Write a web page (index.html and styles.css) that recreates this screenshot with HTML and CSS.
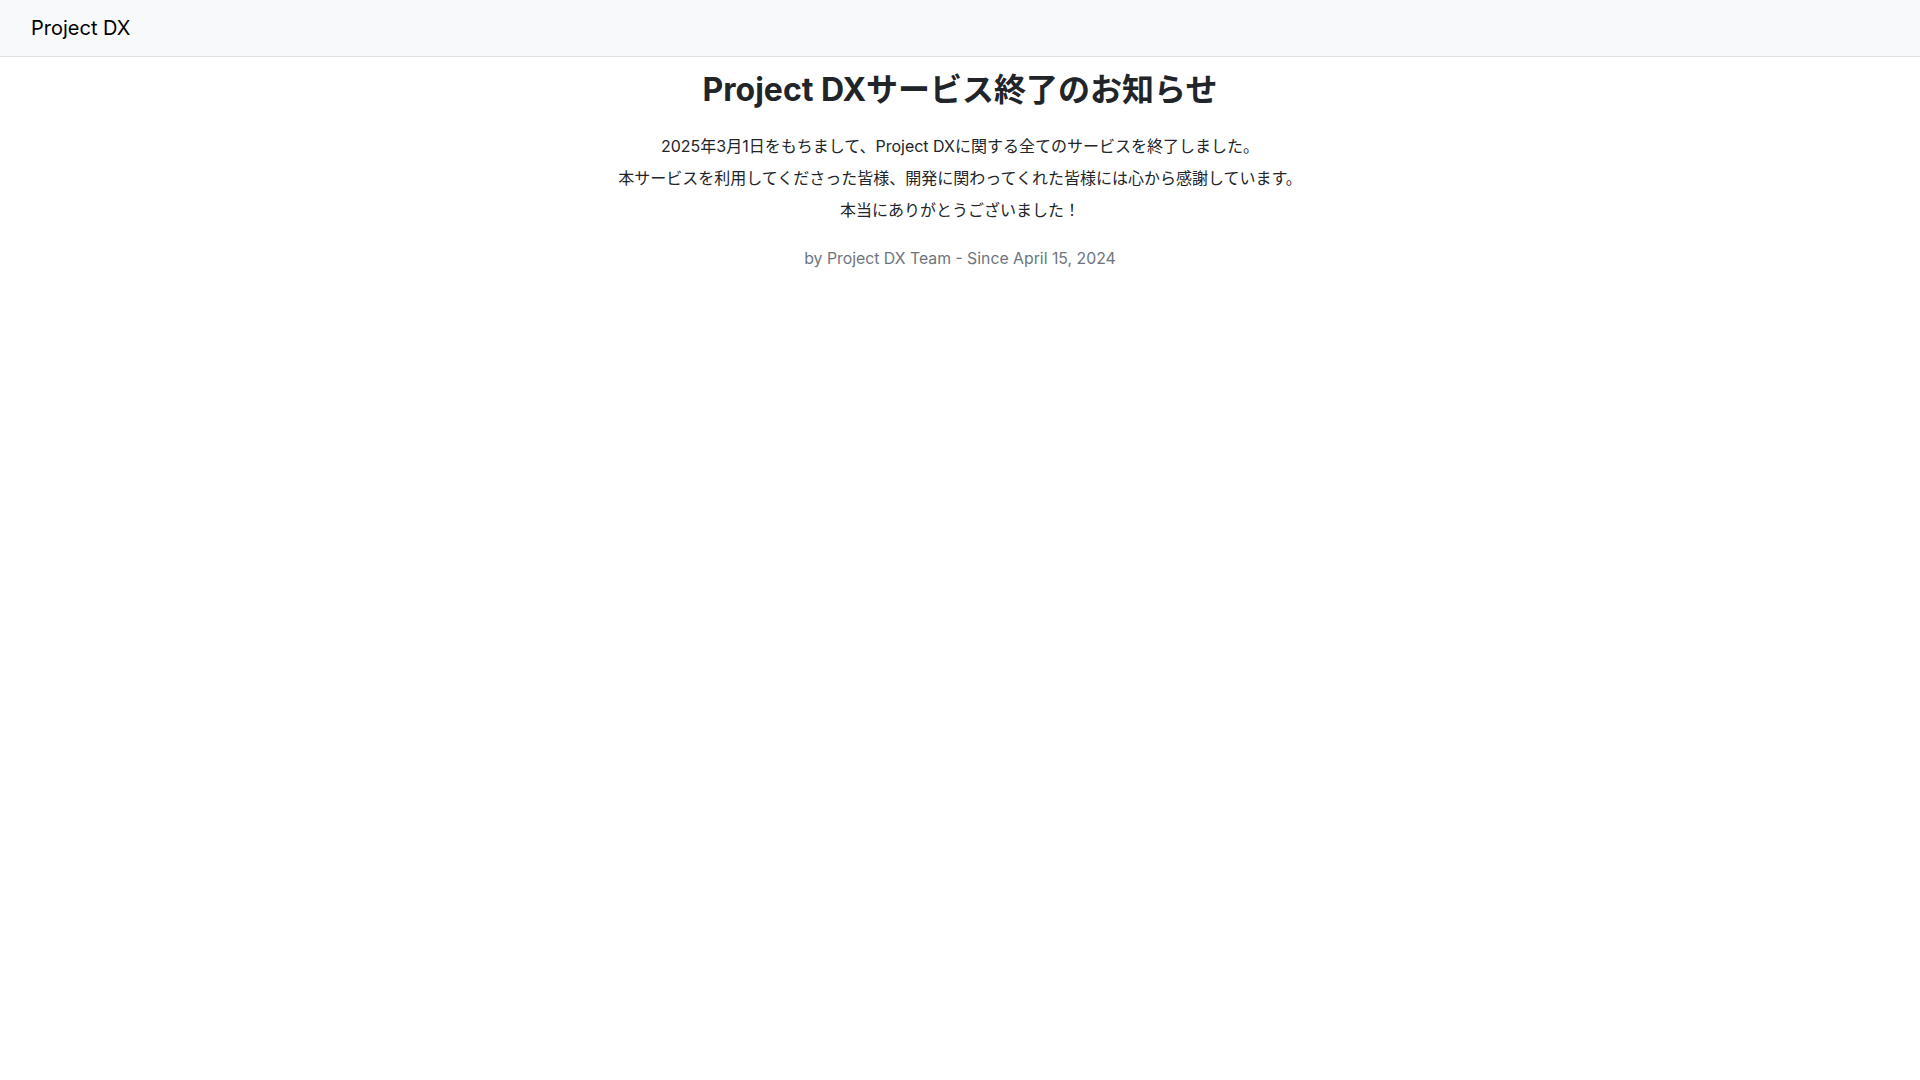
FILE: index.html
```html
<!DOCTYPE html>
<html lang="ja">

<head>
    <meta charset="UTF-8">
    <meta name="viewport" content="width=device-width, initial-scale=1.0">
    <title>Project DX</title>
    <link rel="stylesheet" href="styles.css">
</head>

<body>
    <header class="navbar">
        <a class="navbar-brand" href="/">Project DX</a>
    </header>

    <main class="notice">
        <h1>Project DXサービス終了のお知らせ</h1>
        <p>2025年3月1日をもちまして、Project DXに関する全てのサービスを終了しました。</p>
        <p>本サービスを利用してくださった皆様、開発に関わってくれた皆様には心から感謝しています。</p>
        <p>本当にありがとうございました！</p>
        <p class="credit">by Project DX Team - Since April 15, 2024</p>
    </main>
</body>

</html>
```

FILE: styles.css
```css
body {
    font-family: Inter, "Noto Sans CJK JP", sans-serif;
    margin: 0;
    padding: 0;
    background-color: #fff;
    color: #212529;
    font-size: 16px;
    line-height: 1.5;
}

.navbar {
    background-color: #f8f9fa;
    border-bottom: 1px solid #dee2e6;
    height: 56px;
    display: flex;
    align-items: center;
    padding: 0 31px;
}

.navbar-brand {
    font-size: 20px;
    color: #000;
    text-decoration: none;
}

.notice {
    text-align: center;
    padding-top: 14px;
}

.notice h1 {
    font-size: 32px;
    font-weight: 700;
    line-height: 1.2;
    margin: 0 0 25px 0;
}

.notice p {
    margin: 0 0 8px 0;
    font-size: 16px;
}

.notice .credit {
    color: #6c757d;
    font-size: 15.8px;
    margin-top: 25px;
}
```
